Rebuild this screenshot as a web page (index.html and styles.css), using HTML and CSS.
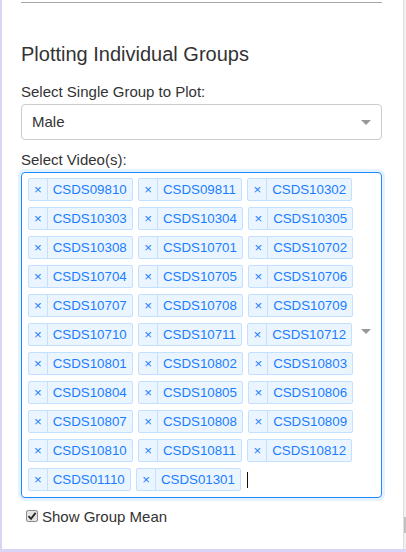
FILE: index.html
```html
<!DOCTYPE html>
<html>
<head>
<meta charset="utf-8">
<link rel="stylesheet" href="styles.css">
</head>
<body>
<div class="frame">
  <div class="panel">
    <div class="rule"></div>
    <h3 class="title">Plotting Individual Groups</h3>
    <div class="label">Select Single Group to Plot:</div>
    <div class="select">
      <div class="value">Male</div>
      <div class="arrow-zone"><span class="arrow"></span></div>
    </div>
    <div class="label label-videos">Select Video(s):</div>
    <div class="select multi">
      <div class="tags">
        <div class="tag"><span class="tag-x">×</span><span class="tag-label">CSDS09810</span></div>
        <div class="tag"><span class="tag-x">×</span><span class="tag-label">CSDS09811</span></div>
        <div class="tag"><span class="tag-x">×</span><span class="tag-label">CSDS10302</span></div>
        <div class="tag"><span class="tag-x">×</span><span class="tag-label">CSDS10303</span></div>
        <div class="tag"><span class="tag-x">×</span><span class="tag-label">CSDS10304</span></div>
        <div class="tag"><span class="tag-x">×</span><span class="tag-label">CSDS10305</span></div>
        <div class="tag"><span class="tag-x">×</span><span class="tag-label">CSDS10308</span></div>
        <div class="tag"><span class="tag-x">×</span><span class="tag-label">CSDS10701</span></div>
        <div class="tag"><span class="tag-x">×</span><span class="tag-label">CSDS10702</span></div>
        <div class="tag"><span class="tag-x">×</span><span class="tag-label">CSDS10704</span></div>
        <div class="tag"><span class="tag-x">×</span><span class="tag-label">CSDS10705</span></div>
        <div class="tag"><span class="tag-x">×</span><span class="tag-label">CSDS10706</span></div>
        <div class="tag"><span class="tag-x">×</span><span class="tag-label">CSDS10707</span></div>
        <div class="tag"><span class="tag-x">×</span><span class="tag-label">CSDS10708</span></div>
        <div class="tag"><span class="tag-x">×</span><span class="tag-label">CSDS10709</span></div>
        <div class="tag"><span class="tag-x">×</span><span class="tag-label">CSDS10710</span></div>
        <div class="tag"><span class="tag-x">×</span><span class="tag-label">CSDS10711</span></div>
        <div class="tag"><span class="tag-x">×</span><span class="tag-label">CSDS10712</span></div>
        <div class="tag"><span class="tag-x">×</span><span class="tag-label">CSDS10801</span></div>
        <div class="tag"><span class="tag-x">×</span><span class="tag-label">CSDS10802</span></div>
        <div class="tag"><span class="tag-x">×</span><span class="tag-label">CSDS10803</span></div>
        <div class="tag"><span class="tag-x">×</span><span class="tag-label">CSDS10804</span></div>
        <div class="tag"><span class="tag-x">×</span><span class="tag-label">CSDS10805</span></div>
        <div class="tag"><span class="tag-x">×</span><span class="tag-label">CSDS10806</span></div>
        <div class="tag"><span class="tag-x">×</span><span class="tag-label">CSDS10807</span></div>
        <div class="tag"><span class="tag-x">×</span><span class="tag-label">CSDS10808</span></div>
        <div class="tag"><span class="tag-x">×</span><span class="tag-label">CSDS10809</span></div>
        <div class="tag"><span class="tag-x">×</span><span class="tag-label">CSDS10810</span></div>
        <div class="tag"><span class="tag-x">×</span><span class="tag-label">CSDS10811</span></div>
        <div class="tag"><span class="tag-x">×</span><span class="tag-label">CSDS10812</span></div>
        <div class="tag"><span class="tag-x">×</span><span class="tag-label">CSDS01110</span></div>
        <div class="tag"><span class="tag-x">×</span><span class="tag-label">CSDS01301</span></div>
        <span class="cursor"></span>
      </div>
      <div class="arrow-zone multi-arrow"><span class="arrow"></span></div>
    </div>
    <div class="check-row">
      <span class="checkbox"><svg width="10" height="10" viewBox="0 0 10 10"><path d="M1.5 5.2 L4 7.8 L8.6 1.8" fill="none" stroke="#2b2b2b" stroke-width="1.9"/></svg></span>
      <span class="check-label">Show Group Mean</span>
    </div>
  </div>
  <div class="track"><div class="thumb"></div></div>
</div>
</body>
</html>
```

FILE: styles.css
```css
html, body {
  margin: 0;
  padding: 0;
}
body {
  background: #d9d6f5;
  font-family: "Liberation Sans", Arial, sans-serif;
  color: #333;
  width: 406px;
  height: 552px;
  overflow: hidden;
}
.frame {
  display: flex;
  height: 549px;
  margin-left: 2px;
}
.panel {
  width: 361px;
  background: #fff;
  padding: 0 21px 0 19px;
  border-right: 1px solid #dedede;
}
.track {
  width: 2px;
  background: #f1f1f1;
  display: flex;
  flex-direction: column;
  justify-content: flex-end;
}
.thumb {
  height: 16px;
  background: #c1c1c1;
  margin-bottom: 16px;
}
.rule {
  margin-top: 2px;
  border-top: 1px solid #a8a8a8;
}
.title {
  margin: 40px 0 0;
  font-size: 20px;
  line-height: 22px;
  font-weight: normal;
  color: #333;
}
.label {
  margin-top: 17px;
  margin-bottom: 2px;
  font-size: 15px;
  line-height: 20px;
}
.label-videos {
  margin-top: 10px;
}
.select {
  display: flex;
  border: 1px solid #ccc;
  border-radius: 4px;
  height: 34px;
  background: #fff;
}
.value {
  flex: 1;
  padding-left: 10px;
  font-size: 15px;
  line-height: 34px;
  color: #333;
}
.arrow-zone {
  width: 20px;
  padding-right: 5px;
  display: flex;
  align-items: center;
  justify-content: center;
}
.arrow {
  width: 0;
  height: 0;
  border-style: solid;
  border-width: 5px 5px 2.5px;
  border-color: #999 transparent transparent;
  margin-top: 2px;
}
.multi {
  height: auto;
  border-color: #1e88ff;
  box-shadow: 0 0 0 3px rgba(0, 126, 255, 0.1);
}
.tags {
  flex: 1;
  min-width: 0;
  display: flex;
  flex-wrap: wrap;
  gap: 6px 5.5px;
  padding: 5px 0 6px 6px;
}
.multi-arrow {
  margin-left: -8px;
  margin-bottom: 7px;
}
.tag {
  display: flex;
  border: 1px solid #c2e0ff;
  background: #ebf5ff;
  border-radius: 2px;
  color: #1a7dff;
  font-size: 13.3px;
  line-height: 17px;
}
.tag-x {
  padding: 2px 5px;
  border-right: 1px solid #c2e0ff;
}
.tag-label {
  padding: 2px 5px;
}
.cursor {
  width: 1px;
  height: 16px;
  background: #111;
  align-self: center;
  margin-left: 0.5px;
}
.check-row {
  display: flex;
  align-items: center;
  margin-top: 9px;
  font-size: 15px;
  line-height: 20px;
}
.checkbox {
  box-sizing: border-box;
  width: 12px;
  height: 12px;
  margin: -3px 4px 0 5px;
  border: 1px solid #8c8c8c;
  border-radius: 2px;
  background: #e4e4e4;
  display: flex;
  align-items: center;
  justify-content: center;
}
.check-label {
  color: #333;
}
```
